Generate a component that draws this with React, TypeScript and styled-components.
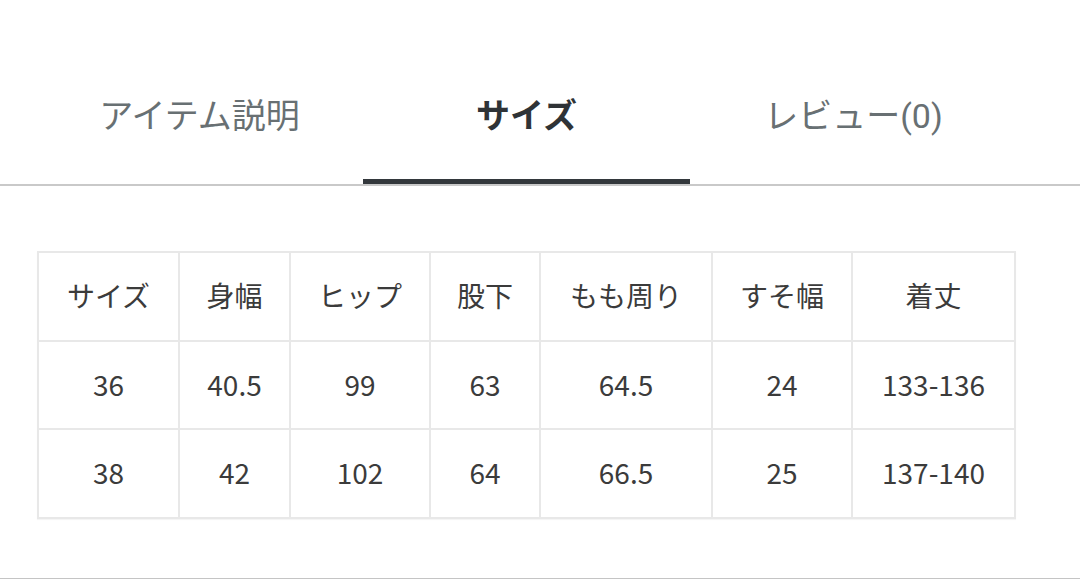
import React from "react";
import styled, { createGlobalStyle } from "styled-components";

const GlobalStyle = createGlobalStyle`
  body {
    margin: 0;
    background: #fff;
    font-family: "Noto Sans CJK JP", "Noto Sans", sans-serif;
  }
`;

const tabs = ["アイテム説明", "サイズ", "レビュー(0)"];
const activeTab = 1;

const columns = [
  { label: "サイズ", width: 141 },
  { label: "身幅", width: 111 },
  { label: "ヒップ", width: 140 },
  { label: "股下", width: 110 },
  { label: "もも周り", width: 172 },
  { label: "すそ幅", width: 140 },
  { label: "着丈", width: 163 },
];

const rows = [
  ["36", "40.5", "99", "63", "64.5", "24", "133-136"],
  ["38", "42", "102", "64", "66.5", "25", "137-140"],
];

export default function App() {
  return (
    <>
      <GlobalStyle />
      <SPage>
        <STabBar>
          {tabs.map((t, i) => (
            <STab key={t} $active={i === activeTab}>
              {t}
            </STab>
          ))}
        </STabBar>
        <SContent>
          <STable>
            <colgroup>
              {columns.map((c) => (
                <col key={c.label} style={{ width: c.width }} />
              ))}
            </colgroup>
            <thead>
              <tr>
                {columns.map((c) => (
                  <STh key={c.label}>{c.label}</STh>
                ))}
              </tr>
            </thead>
            <tbody>
              {rows.map((r) => (
                <tr key={r[0]}>
                  {r.map((v, i) => (
                    <STd key={i}>{v}</STd>
                  ))}
                </tr>
              ))}
            </tbody>
          </STable>
        </SContent>
      </SPage>
    </>
  );
}

const SPage = styled.div`
  width: 1080px;
  height: 579px;
  overflow: hidden;
`;

const STabBar = styled.div`
  display: flex;
  padding: 0 0 0 36px;
  border-bottom: 2px solid #c9c9c9;
  height: 184px;
  align-items: flex-end;
`;

const STab = styled.div<{ $active: boolean }>`
  width: 327px;
  box-sizing: border-box;
  text-align: center;
  font-family: Roboto, "Noto Sans CJK JP", sans-serif;
  font-size: 34px;
  line-height: 48px;
  padding-bottom: 39px;
  color: ${(p) => (p.$active ? "#2f3336" : "#687073")};
  font-weight: ${(p) => (p.$active ? 700 : 400)};
  border-bottom: 5px solid ${(p) => (p.$active ? "#33383c" : "transparent")};
`;

const SContent = styled.div`
  padding: 65px 0 0 37px;
  height: 327px;
  border-bottom: 2px solid #c4c4c4;
`;

const STable = styled.table`
  border-collapse: collapse;
  table-layout: fixed;
  width: 977px;
  border: 2px solid #e8e8e8;
  box-shadow: 0 1px 1px rgba(0, 0, 0, 0.04);
`;

const SCell = `
  border: 2px solid #e8e8e8;
  height: 84.5px;
  padding: 0 0 2px;
  text-align: center;
  vertical-align: middle;
  font-size: 28px;
  font-weight: 400;
  color: #3b3b3b;
`;

const STh = styled.th`
  ${SCell}
`;

const STd = styled.td`
  ${SCell}
`;
